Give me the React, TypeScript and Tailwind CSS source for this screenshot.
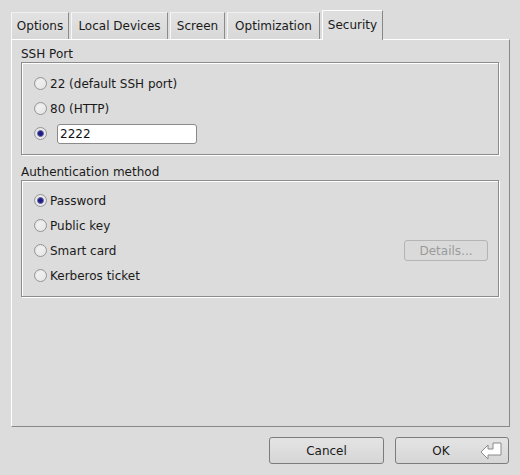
import React from "react";

const tabs = [
  { label: "Options", w: "w-[58px]" },
  { label: "Local Devices", w: "w-[97px]" },
  { label: "Screen", w: "w-[55px]" },
  { label: "Optimization", w: "w-[93px]" },
  { label: "Security", w: "w-[61px]" },
];

const Radio = ({ checked }: { checked?: boolean }) => (
  <span className="relative flex h-[13px] w-[13px] shrink-0 items-center justify-center rounded-full border border-[#959595] bg-[linear-gradient(135deg,#f6f6f6,#e4e4e4)] shadow-[inset_1px_1px_1px_rgba(0,0,0,0.06)]">
    {checked && (
      <span className="h-[7px] w-[7px] rounded-full border border-[#6a6a9a] bg-[#1c1c8a]" />
    )}
  </span>
);

const Row = ({ label, checked }: { label: string; checked?: boolean }) => (
  <div className="flex h-[25px] items-center">
    <Radio checked={checked} />
    <span className="ml-[3px]">{label}</span>
  </div>
);

const Group = ({ title, children }: { title: string; children: React.ReactNode }) => (
  <div className="flex flex-col">
    <div className="h-[16px] leading-[16px]">{title}</div>
    <div className="border border-[#8c8c8c] pl-[12px] pr-[10px] shadow-[inset_1px_1px_0_#fff,1px_1px_0_#fff]">
      {children}
    </div>
  </div>
);

export default function App() {
  return (
    <div
      className="flex h-[475px] w-[520px] flex-col bg-[#dcdcdc] text-[12px] text-[#1a1a1a]"
      style={{ fontFamily: "'DejaVu Sans', sans-serif" }}
    >
      <div className="ml-[11px] mt-[10px] flex h-[29px] items-end gap-[2px]">
        {tabs.map((t) => {
          const active = t.label === "Security";
          return (
            <div
              key={t.label}
              className={
                active
                  ? `relative z-10 -mb-px flex h-[30px] ${t.w} items-center justify-center border-l border-t border-r border-l-white border-t-white border-r-[#888] bg-[#dedede] pb-[2px]`
                  : `flex h-[27px] ${t.w} items-center justify-center border-l border-t border-r border-l-[#f6f6f6] border-t-[#f0f0f0] border-r-[#8a8a8a] bg-[linear-gradient(#e2e2e2,#d8d8d8)]`
              }
            >
              {t.label}
            </div>
          );
        })}
      </div>

      <div className="ml-[11px] flex h-[388px] w-[499px] flex-col gap-[9px] border-b border-l border-r border-t border-b-[#888] border-l-white border-r-[#888] border-t-white pl-[9px] pr-[10px] pt-[6px]">
        <Group title="SSH Port">
          <div className="py-[8px]">
            <Row label="22 (default SSH port)" />
            <Row label="80 (HTTP)" />
            <div className="flex h-[25px] items-center">
              <Radio checked />
              <input
                readOnly
                value="2222"
                className="ml-[10px] h-[20px] w-[140px] rounded-[3px] border border-[#8a8a8a] bg-white px-[2px] text-[12px] text-[#111] outline-none"
                style={{ fontFamily: "'DejaVu Sans', sans-serif" }}
              />
            </div>
          </div>
        </Group>

        <Group title="Authentication method">
          <div className="pb-[8px] pt-[7px]">
            <Row label="Password" checked />
            <Row label="Public key" />
            <div className="flex h-[25px] items-center">
              <Radio />
              <span className="ml-[3px]">Smart card</span>
              <button className="ml-auto h-[21px] w-[84px] rounded-[3px] border border-[#b4b4b4] bg-[#dadada] text-[12px] text-[#9a9a9a]">
                Details...
              </button>
            </div>
            <Row label="Kerberos ticket" />
          </div>
        </Group>
      </div>

      <div className="mr-[11px] mt-[10px] flex justify-end gap-[11px]">
        <button className="h-[27px] w-[115px] rounded-[3px] border border-[#7c7c7c] bg-[linear-gradient(#e4e4e4,#d6d6d6)] text-[12px] text-[#1a1a1a]">
          Cancel
        </button>
        <button className="relative flex h-[27px] w-[114px] items-center justify-center rounded-[3px] border border-[#7c7c7c] bg-[linear-gradient(#e4e4e4,#d6d6d6)] pr-[22px] text-[12px] text-[#1a1a1a]">
          OK
          <svg
            className="absolute right-[6px] top-[4px]"
            width="22"
            height="18"
            viewBox="0 0 22 18"
          >
            <polygon
              points="1,10 8,3 8,7 13,7 13,1 21,1 21,13 8,13 8,17"
              fill="#fff"
              stroke="#8a8a8a"
              strokeWidth="1"
            />
          </svg>
        </button>
      </div>
    </div>
  );
}
